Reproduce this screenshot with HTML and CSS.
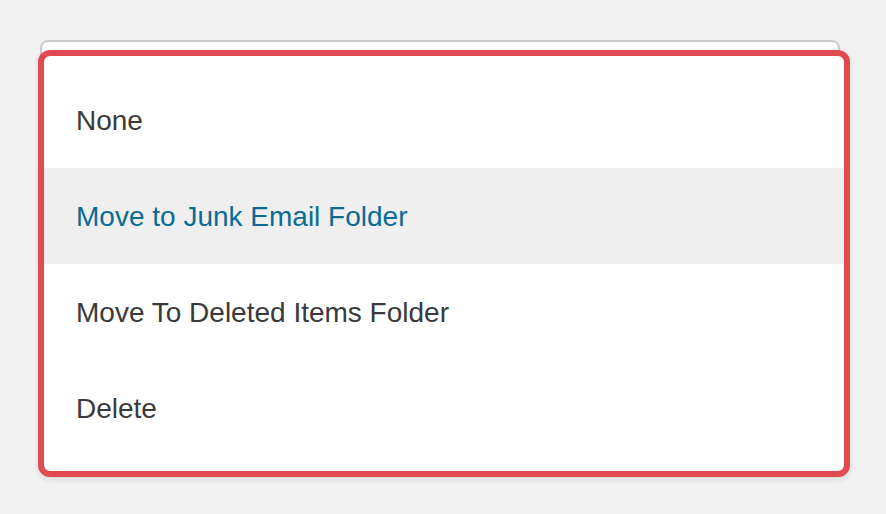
FILE: index.html
```html
<!DOCTYPE html>
<html>
<head>
<meta charset="utf-8">
<link rel="stylesheet" href="styles.css">
</head>
<body>
<div class="page">
  <div class="field">
    <div class="select"></div>
    <ul class="menu">
      <li class="item">None</li>
      <li class="item active">Move to Junk Email Folder</li>
      <li class="item">Move To Deleted Items Folder</li>
      <li class="item">Delete</li>
    </ul>
  </div>
</div>
</body>
</html>
```
FILE: styles.css
```css
html, body {
  margin: 0;
  padding: 0;
  background: #f2f2f2;
  font-family: "Liberation Sans", Arial, sans-serif;
}
.page {
  padding: 40px 46px 0 40px;
  height: 514px;
  box-sizing: border-box;
}
.field {
  position: relative;
  width: 800px;
}
.select {
  height: 44px;
  background: #fff;
  border: 2px solid #cccccc;
  border-radius: 8px;
  box-sizing: border-box;
}
.menu {
  position: absolute;
  top: 10px;
  left: -2px;
  width: 812px;
  margin: 0;
  padding: 16px 0 15px;
  list-style: none;
  background: #fff;
  border: 6px solid #e24a52;
  border-radius: 12px;
  box-sizing: border-box;
  box-shadow: 0 2px 6px rgba(0,0,0,0.12);
}
.item {
  height: 96px;
  box-sizing: border-box;
  display: flex;
  align-items: center;
  padding: 2px 0 0 32px;
  font-size: 28px;
  color: #3a3a3a;
}
.item.active {
  background: #efefef;
  color: #0b6b95;
}
```
